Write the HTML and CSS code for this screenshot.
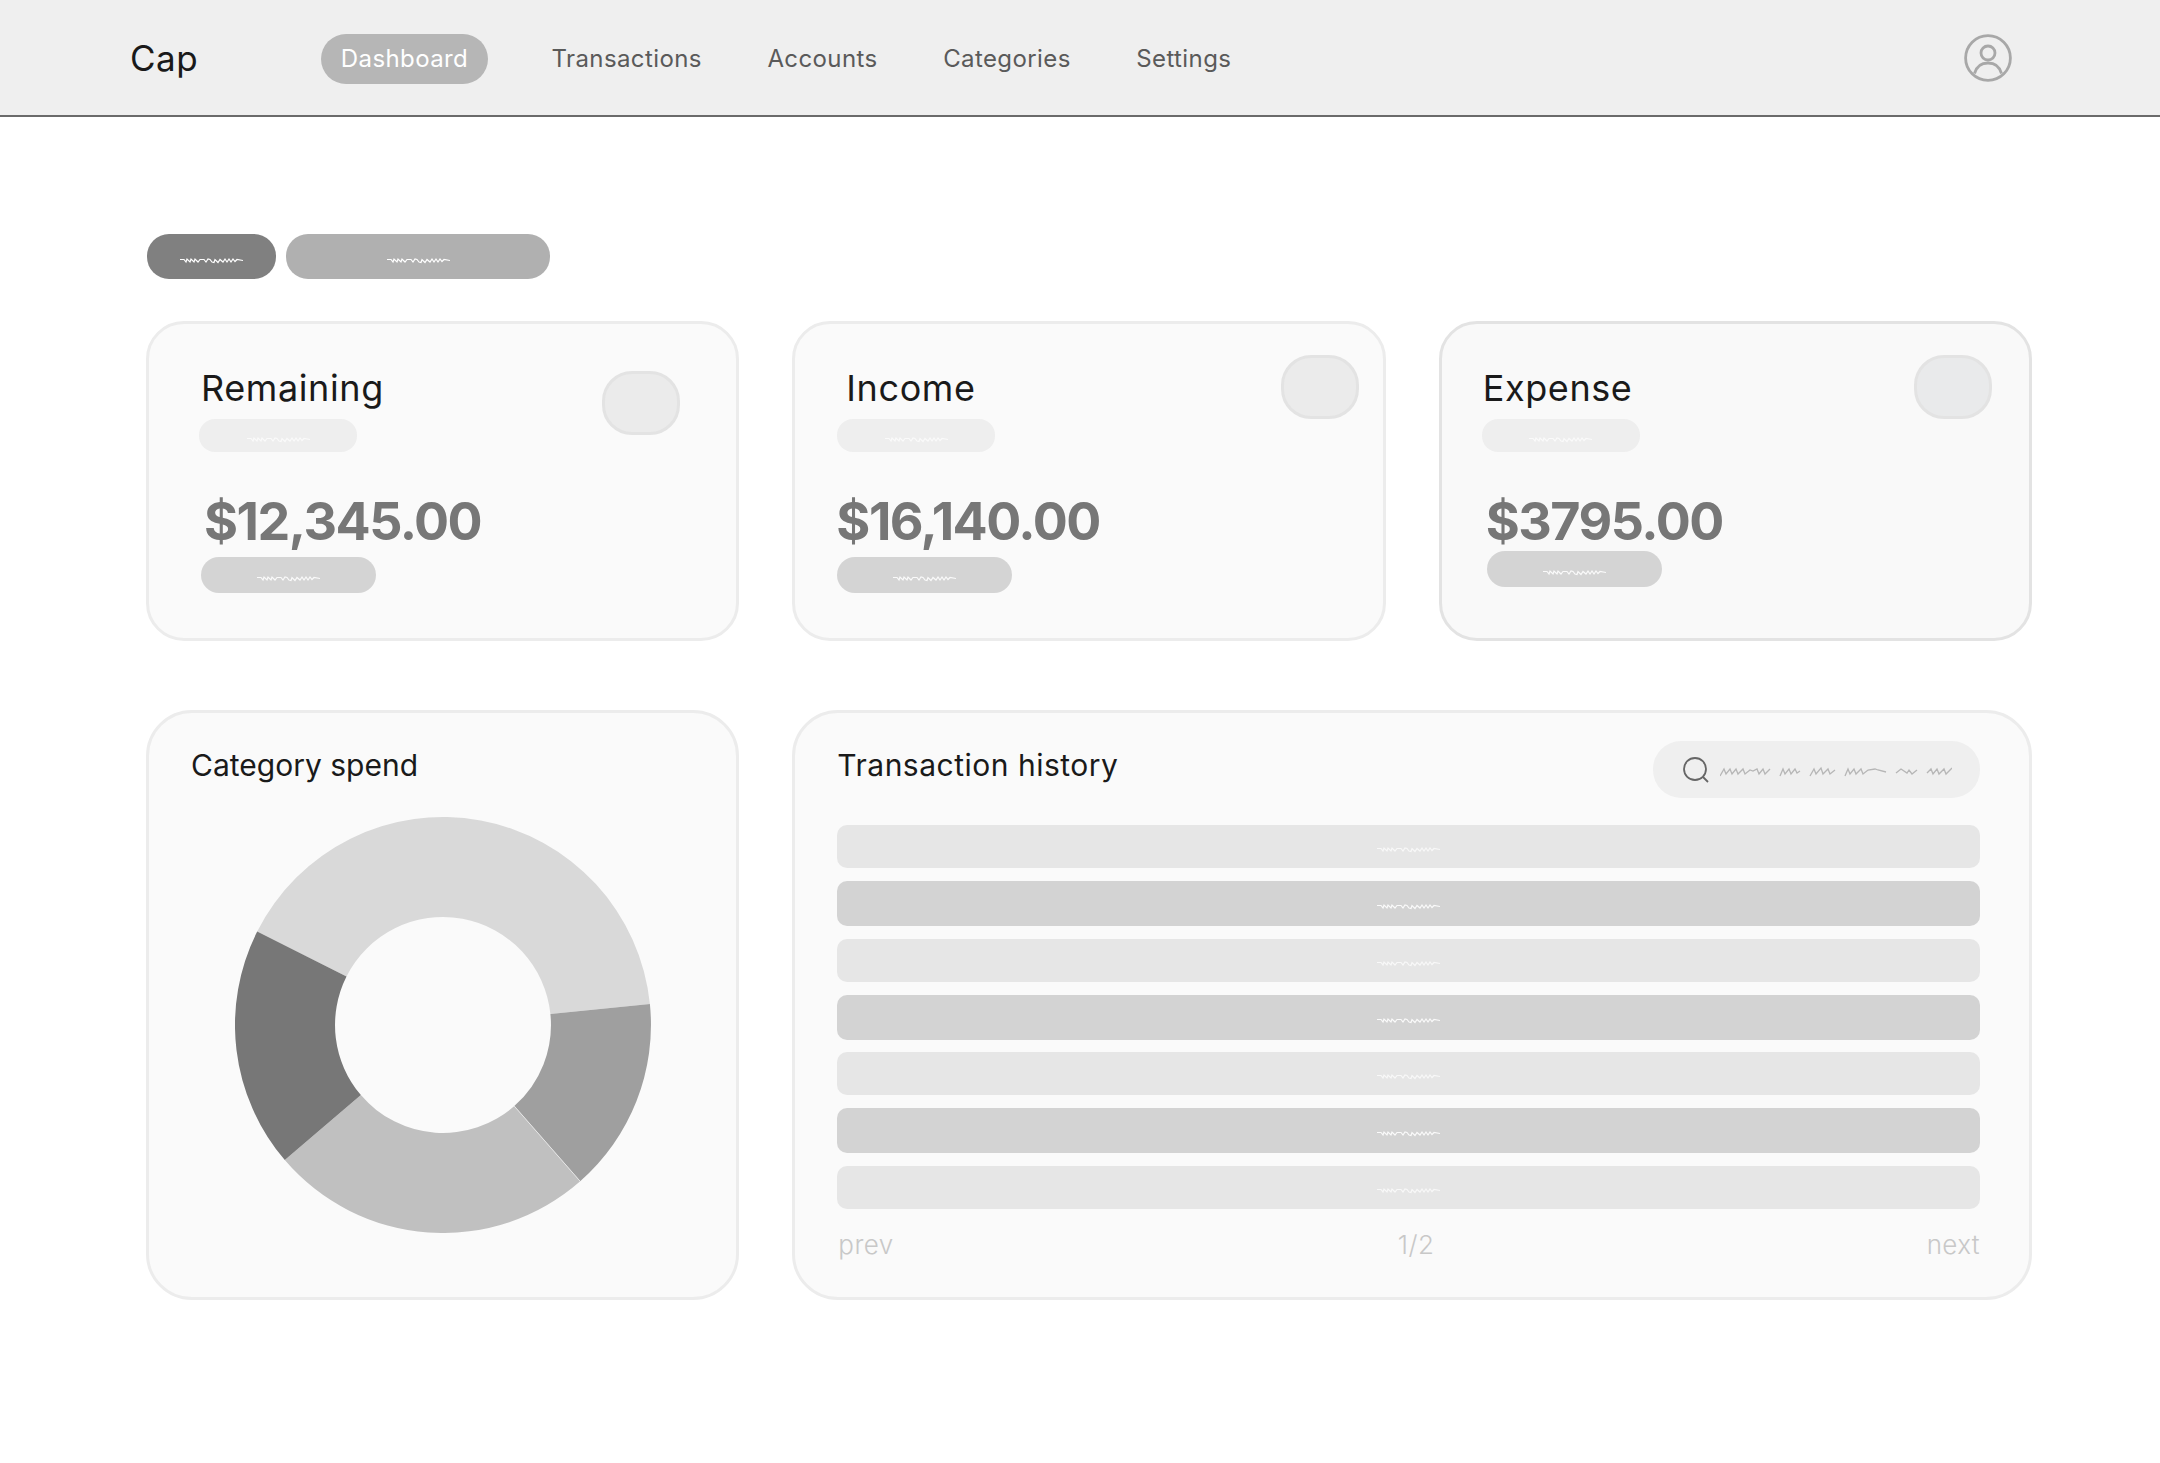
FILE: index.html
```html
<!DOCTYPE html>
<html lang="en">
<head>
    <meta charset="UTF-8">
    <meta name="viewport" content="width=device-width, initial-scale=1.0">
    <title>Cap Dashboard</title>
    <link rel="stylesheet" href="styles.css">
</head>
<body>
    <svg class="defs" width="0" height="0" aria-hidden="true">
        <symbol id="squiggle" viewBox="0 0 63 7">
            <path d="M0 2.5H4L6 5L7 2L10 5L11 2L14 5L15 2L18 5L20 2.5H24L26 5L28 2L30 2.5L32 5L34 5.5L35 2.5L38 5.5L40 2.5L43 5L45 2L47 5L49 2L51 5L53 2L55 4.5L57 2.5L63 3.5" fill="none" stroke="currentColor" stroke-width="1.2"/>
        </symbol>
    </svg>

    <header class="topbar">
        <div class="logo">Cap</div>
        <nav class="nav">
            <a class="nav-link active">Dashboard</a>
            <a class="nav-link">Transactions</a>
            <a class="nav-link">Accounts</a>
            <a class="nav-link">Categories</a>
            <a class="nav-link">Settings</a>
        </nav>
        <svg class="user-icon" viewBox="0 0 48 48" fill="none" stroke="#a8a8a8" stroke-width="2.8">
            <circle cx="24" cy="24" r="22.4"/>
            <circle cx="24" cy="19" r="7"/>
            <path d="M10.5 39.5C12.5 32.5 17.5 29 24 29C30.5 29 35.5 32.5 37.5 39.5"/>
        </svg>
    </header>

    <main class="content">
        <div class="tabs">
            <div class="tab tab-active"><svg class="squiggle"><use href="#squiggle"/></svg></div>
            <div class="tab tab-wide"><svg class="squiggle"><use href="#squiggle"/></svg></div>
        </div>

        <div class="grid">
            <section class="card stat stat-remaining">
                <div class="bubble"></div>
                <h2 class="stat-title">Remaining</h2>
                <div class="stat-label"><svg class="squiggle"><use href="#squiggle"/></svg></div>
                <div class="stat-amount">$12,345.00</div>
                <div class="stat-change"><svg class="squiggle"><use href="#squiggle"/></svg></div>
            </section>
            <section class="card stat stat-income">
                <div class="bubble"></div>
                <h2 class="stat-title">Income</h2>
                <div class="stat-label"><svg class="squiggle"><use href="#squiggle"/></svg></div>
                <div class="stat-amount">$16,140.00</div>
                <div class="stat-change"><svg class="squiggle"><use href="#squiggle"/></svg></div>
            </section>
            <section class="card stat stat-expense">
                <div class="bubble"></div>
                <h2 class="stat-title">Expense</h2>
                <div class="stat-label"><svg class="squiggle"><use href="#squiggle"/></svg></div>
                <div class="stat-amount">$3795.00</div>
                <div class="stat-change"><svg class="squiggle"><use href="#squiggle"/></svg></div>
            </section>

            <section class="card panel category">
                <h2 class="panel-title">Category spend</h2>
                <svg class="donut" viewBox="0 0 416 416">
                    <path fill="#d9d9d9" d="M22.2 114.5A208 208 0 0 1 414.9 187L315.4 197.1A108 108 0 0 0 111.5 159.5Z"/>
                    <path fill="#9f9f9f" d="M414.9 187A208 208 0 0 1 345.2 364.3L279.3 289.1A108 108 0 0 0 315.4 197.1Z"/>
                    <path fill="#c0c0c0" d="M345.2 364.3A208 208 0 0 1 49.8 343.1L125.9 278.1A108 108 0 0 0 279.3 289.1Z"/>
                    <path fill="#777777" d="M49.8 343.1A208 208 0 0 1 22.2 114.5L111.5 159.5A108 108 0 0 0 125.9 278.1Z"/>
                    <line x1="279.3" y1="289.1" x2="345.2" y2="364.3" stroke="#fafafa" stroke-width="0.6"/>
                </svg>
            </section>

            <section class="card panel history">
                <div class="history-head">
                    <h2 class="panel-title">Transaction history</h2>
                    <div class="search">
                        <svg class="search-icon" viewBox="0 0 26 26" fill="none" stroke="#666" stroke-width="1.8">
                            <circle cx="12" cy="12" r="11"/>
                            <path d="M20 20L25 25"/>
                        </svg>
                        <svg class="search-text" viewBox="0 0 232 12" fill="none" stroke="#b6b6b6" stroke-width="1.3">
                            <path d="M0 10L4 3L6 8L10 3L12 8L16 3L18 8L23 3L25 8L30 4L33 5L37 3L39 8L43 3L45 8L50 3"/>
                            <path d="M60 10L63 3L65 8L69 3L71 8L75 3L77 7L80 5"/>
                            <path d="M90 10L94 3L96 8L101 2L103 8L108 3L110 8L115 4"/>
                            <path d="M125 10L128 3L130 8L134 3L136 8L141 3L143 8L148 4L155 3L158 4L166 6"/>
                            <path d="M176 7L181 3L187 7L189 4L192 8L197 4"/>
                            <path d="M207 7L211 3L213 8L217 3L219 8L224 3L226 8L232 2"/>
                        </svg>
                    </div>
                </div>
                <div class="rows">
                    <div class="row"><svg class="squiggle"><use href="#squiggle"/></svg></div>
                    <div class="row row-dark"><svg class="squiggle"><use href="#squiggle"/></svg></div>
                    <div class="row"><svg class="squiggle"><use href="#squiggle"/></svg></div>
                    <div class="row row-dark"><svg class="squiggle"><use href="#squiggle"/></svg></div>
                    <div class="row"><svg class="squiggle"><use href="#squiggle"/></svg></div>
                    <div class="row row-dark"><svg class="squiggle"><use href="#squiggle"/></svg></div>
                    <div class="row"><svg class="squiggle"><use href="#squiggle"/></svg></div>
                </div>
                <div class="pager">
                    <span>prev</span>
                    <span class="pager-count">1/2</span>
                    <span>next</span>
                </div>
            </section>
        </div>
    </main>
</body>
</html>
```
FILE: styles.css
```css
* {
    box-sizing: border-box;
}
body {
    margin: 0;
    background-color: #ffffff;
    font-family: Inter, 'Noto Sans', sans-serif;
    color: #1a1a1a;
}
h2 {
    margin: 0;
    font-weight: 400;
}
.defs {
    position: absolute;
}
.squiggle {
    display: block;
    width: 63px;
    height: 7px;
}

/* top bar */
.topbar {
    display: flex;
    align-items: center;
    height: 117px;
    padding: 0 148px 0 130px;
    background-color: #efefef;
    border-bottom: 2px solid #6a6a6a;
}
.logo {
    width: 191px;
    font-size: 35px;
    letter-spacing: 0.5px;
}
.nav {
    display: flex;
    align-items: center;
    flex: 1;
    gap: 65.5px;
    margin-top: 3px;
}
.nav-link {
    font-size: 24px;
    line-height: 50px;
    letter-spacing: 0.4px;
    color: #5a5a5a;
}
.nav-link.active {
    height: 50px;
    width: 167px;
    margin-right: -2px;
    text-align: center;
    border-radius: 25px;
    background-color: #b6b6b6;
    color: #ffffff;
}
.user-icon {
    width: 48px;
    height: 48px;
}

/* main content */
.content {
    padding: 117px 128px 0 146px;
}
.tabs {
    display: flex;
    gap: 10px;
    margin: 0 0 42px 1px;
}
.tab {
    display: flex;
    align-items: center;
    justify-content: center;
    width: 129px;
    height: 45px;
    padding-top: 7px;
    border-radius: 22px;
    background-color: #808080;
    color: #ffffff;
}
.tab-wide {
    width: 264px;
    background-color: #b0b0b0;
}
.grid {
    display: grid;
    grid-template-columns: repeat(3, 1fr);
    grid-template-rows: 320px 590px;
    column-gap: 53px;
    row-gap: 69px;
}
.card {
    position: relative;
    border: 3px solid #ececec;
    background-color: #fafafa;
}

/* stat cards */
.stat {
    padding-top: 42px;
    border-radius: 38px;
}
.stat-expense {
    border-color: #e3e3e3;
    background-color: #f9f9f9;
}
.stat-title {
    font-size: 36px;
    line-height: 44px;
    letter-spacing: 0.6px;
    color: #1a1a1a;
}
.stat-label {
    display: flex;
    align-items: center;
    justify-content: center;
    width: 158px;
    height: 33px;
    margin-top: 9px;
    padding-top: 7px;
    border-radius: 16px;
    background-color: #eeeeee;
    color: #fafafa;
}
.stat-amount {
    margin-top: 40px;
    font-size: 52px;
    line-height: 60px;
    letter-spacing: -1.5px;
    font-weight: 700;
    color: #777777;
}
.stat-change {
    display: flex;
    align-items: center;
    justify-content: center;
    width: 175px;
    height: 36px;
    margin-top: 5px;
    padding-top: 7px;
    border-radius: 18px;
    background-color: #d4d4d4;
    color: #fafafa;
}
.stat-expense .stat-change {
    margin-top: -1px;
}
.stat-remaining .stat-title { margin-left: 52px; }
.stat-remaining .stat-label { margin-left: 50px; }
.stat-remaining .stat-amount { margin-left: 55px; }
.stat-remaining .stat-change { margin-left: 52px; }
.stat-income .stat-title { margin-left: 51px; }
.stat-income .stat-label { margin-left: 42px; }
.stat-income .stat-amount { margin-left: 41px; }
.stat-income .stat-change { margin-left: 42px; }
.stat-expense .stat-title { margin-left: 41px; }
.stat-expense .stat-label { margin-left: 40px; }
.stat-expense .stat-amount { margin-left: 44px; }
.stat-expense .stat-change { margin-left: 45px; }
.bubble {
    position: absolute;
    top: 31px;
    right: 37px;
    width: 78px;
    height: 64px;
    border: 3px solid #e3e3e3;
    border-radius: 30px;
    background-color: #ebebeb;
}
.stat-remaining .bubble {
    top: 47px;
    right: 56px;
}
.stat-income .bubble {
    right: 24px;
}
.stat-expense .bubble {
    background-color: #e9eaeb;
}

/* bottom panels */
.panel {
    border-radius: 46px;
}
.panel-title {
    font-size: 30px;
    line-height: 38px;
}
.category {
    padding: 33px 0 0 42px;
}
.donut {
    display: block;
    width: 416px;
    height: 416px;
    margin: 33px 0 0 44px;
}
.history {
    grid-column: span 2;
    padding: 28px 49px 0 42px;
}
.history-head {
    display: flex;
    justify-content: space-between;
    align-items: flex-start;
}
.history-head .panel-title {
    margin-top: 5px;
    letter-spacing: 0.5px;
}
.search {
    display: flex;
    align-items: center;
    width: 327px;
    height: 57px;
    padding: 0 0 0 30px;
    border-radius: 28px;
    background-color: #efefef;
}
.search-icon {
    width: 26px;
    height: 26px;
    margin-right: 11px;
}
.search-text {
    width: 232px;
    height: 12px;
    margin-top: 4px;
}
.rows {
    display: flex;
    flex-direction: column;
    gap: 12.85px;
    margin-top: 27px;
}
.row {
    display: flex;
    align-items: center;
    justify-content: center;
    height: 43px;
    padding-top: 6px;
    border-radius: 10px;
    background-color: #e6e6e6;
    color: #f8f8f8;
}
.row-dark {
    height: 45px;
    background-color: #d3d3d3;
    color: #fafafa;
}
.pager {
    display: flex;
    justify-content: space-between;
    margin-top: 18px;
    padding-left: 1px;
    font-size: 26px;
    line-height: 36px;
    letter-spacing: 0.4px;
    font-weight: 300;
    color: #c8c8c8;
}
.pager-count {
    margin-left: 12px;
}
```
